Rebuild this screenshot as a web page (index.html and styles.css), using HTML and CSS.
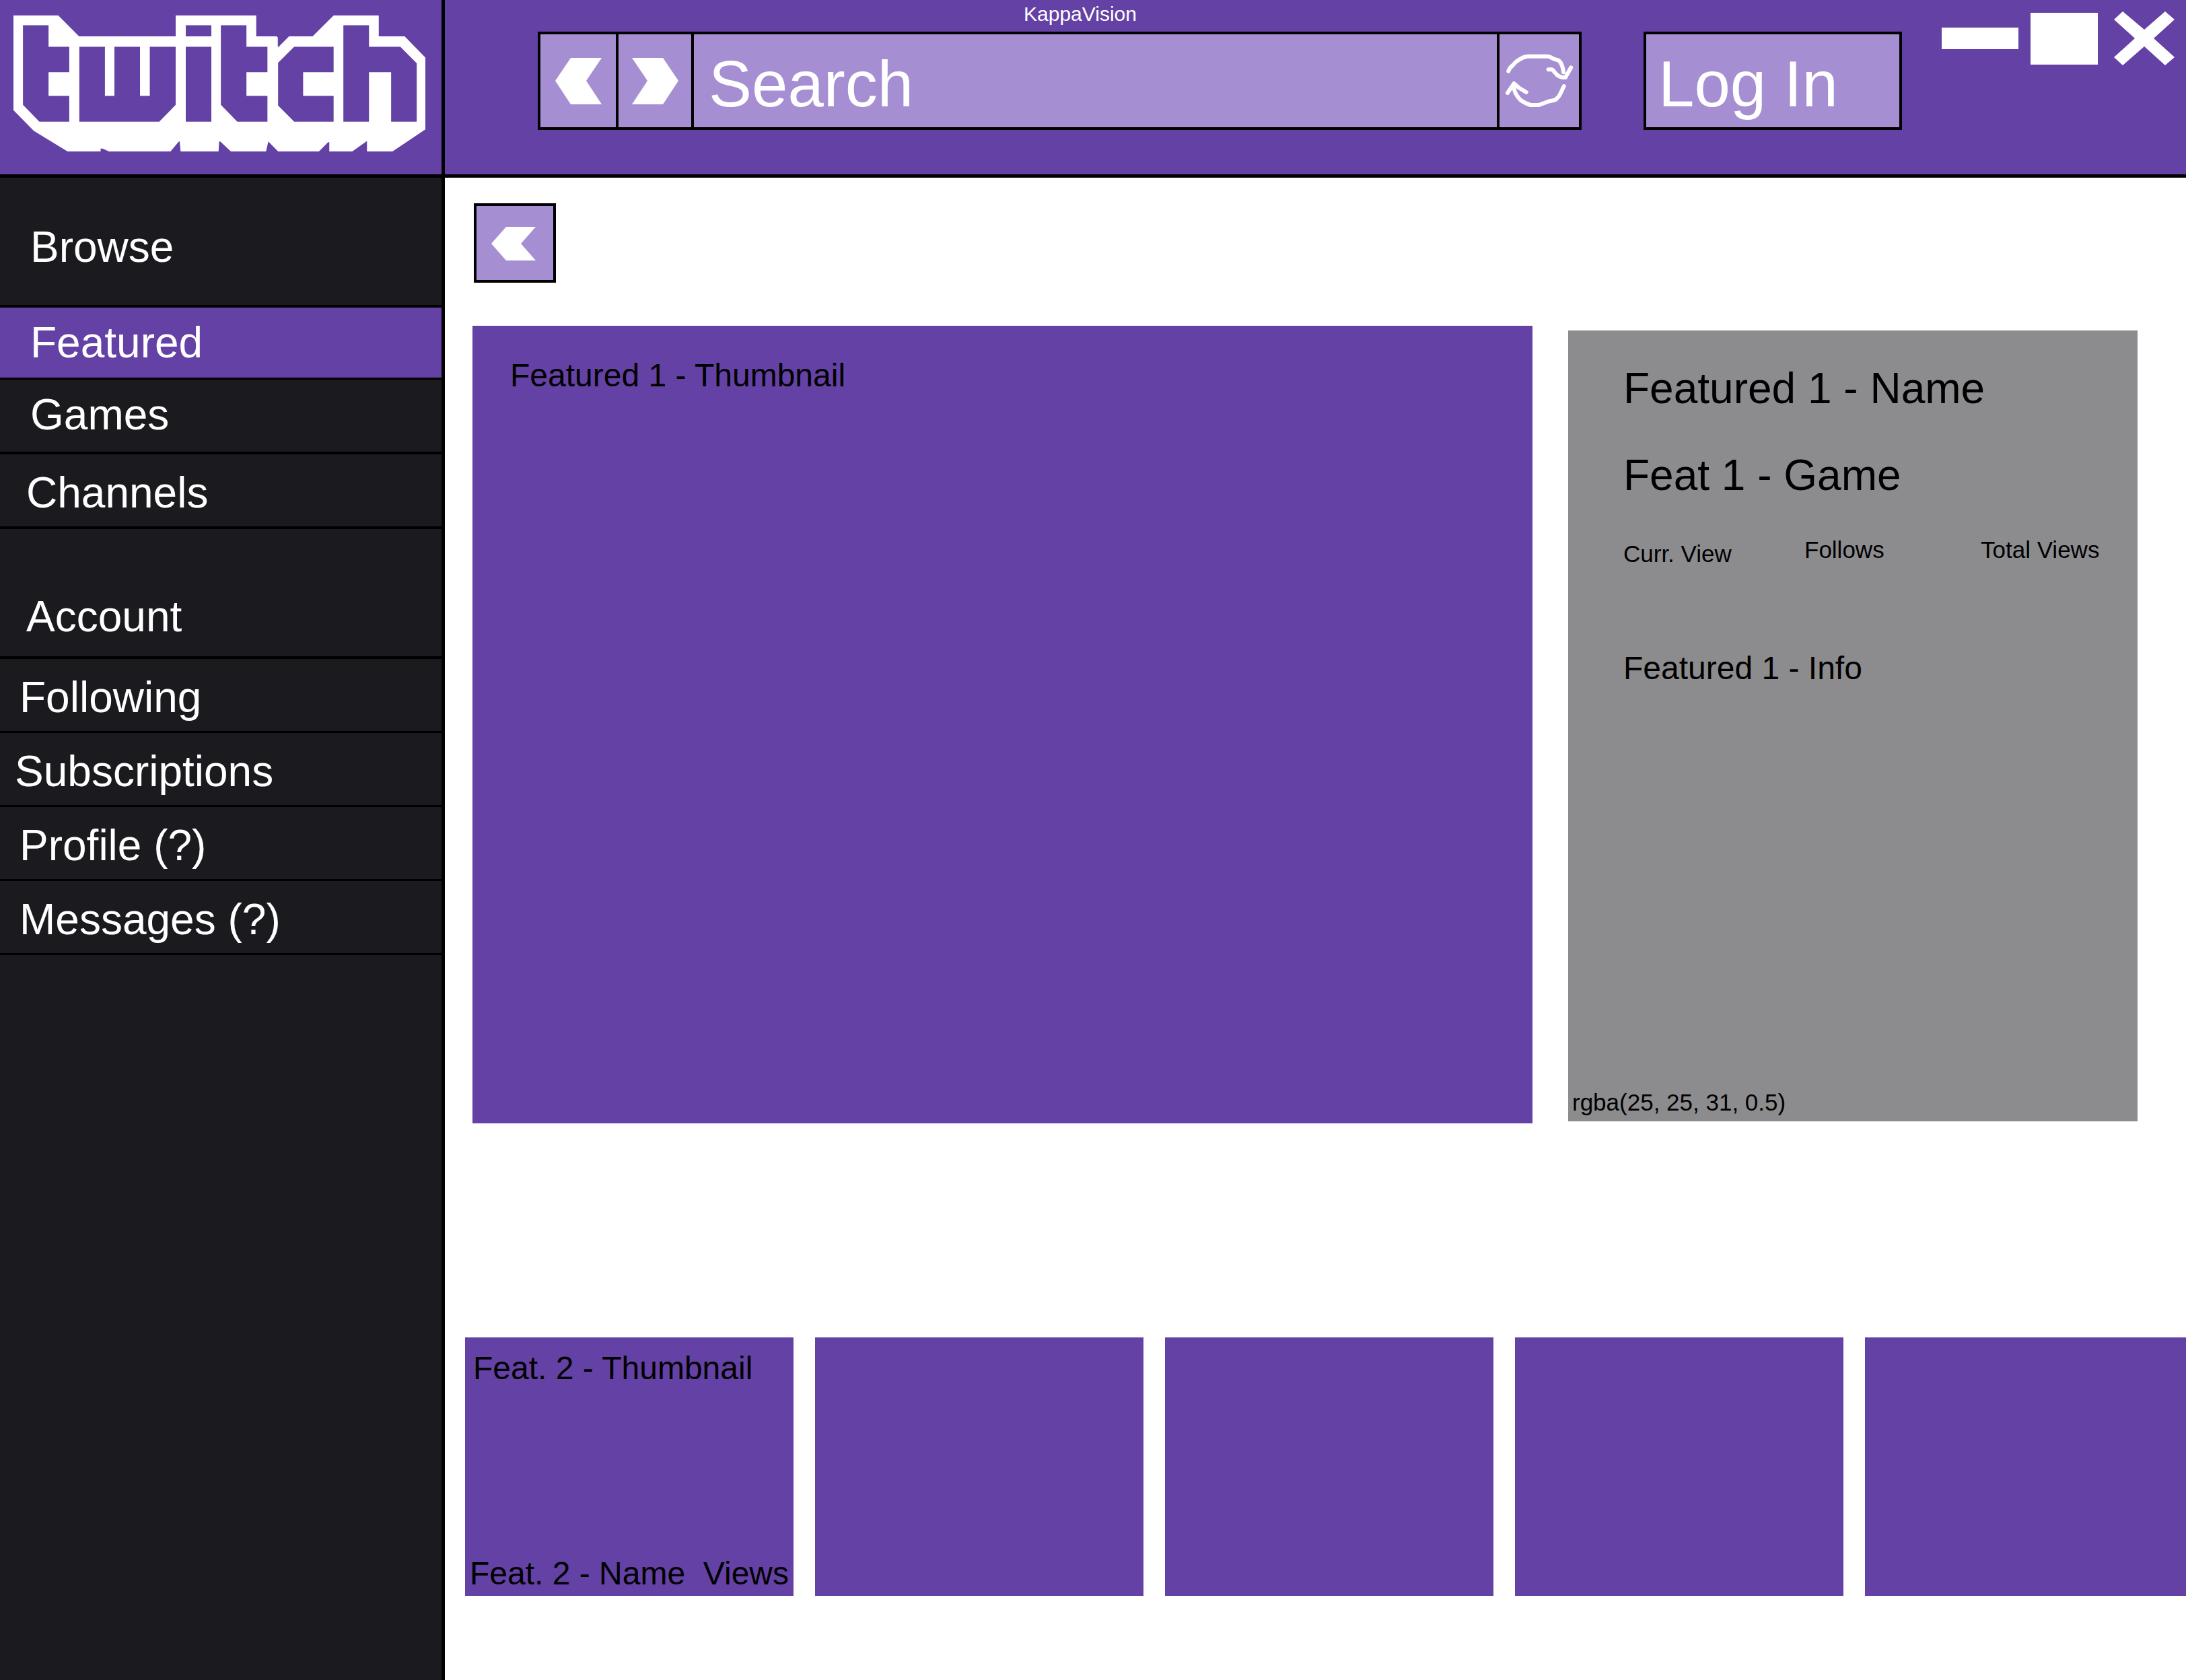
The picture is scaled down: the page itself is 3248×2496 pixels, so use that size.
FILE: index.html
```html
<!DOCTYPE html>
<html lang="en">
<head>
<meta charset="utf-8">
<meta name="viewport" content="width=device-width, initial-scale=1">
<title>KappaVision</title>
<link rel="stylesheet" href="styles.css">
</head>
<body>
<div class="app">
  <div class="brand">
    <svg class="brand-logo" viewBox="48 70 1432 604" preserveAspectRatio="none" role="img" aria-label="Twitch">
      <path fill="#fff" fill-rule="evenodd" d="M48 70H204L276 163H612V70H892V163H963L967 168V209H970L1006 163H1088L1161 70H1318V163H1408L1480 257V576L1366 674H1277V628L1226 674H1146V633H1142L1110 674H968L934 630L926 674H804L767 630H763L761 674H629L626 630H623L594 674H380L358 661H351V674H236L119 583L48 491Z
        M81 113H170V209H242V322H170V427H242V542H138L81 467Z
        M277 209H366V427H399V209H488V427H522V209H612V467L555 542H277Z
        M647 113H736V163H647Z M647 209H736V542H647Z
        M769 113H858V209H931V322H858V427H931V542H826L769 467Z
        M1024 209H1161V322H1055V427H1161V542H1024L968 470V280Z
        M1195 113H1284V209H1393L1450 282V542H1361V322H1284V542H1195Z"/>
    </svg>
  </div>

  <header class="topbar">
    <div class="topbar-main">
      <div class="app-title">KappaVision</div>
      <div class="toolbar">
        <form class="search" role="search">
          <button class="search-button search-back" type="button" aria-label="Back">
            <svg class="arrow" viewBox="0 0 69 69"><path d="M0 34 23 0H69L46 34 69 69H23Z"/></svg>
          </button>
          <button class="search-button search-forward" type="button" aria-label="Forward">
            <svg class="arrow" viewBox="0 0 69 69"><path d="M69 34 46 0H0L23 34 0 69H46Z"/></svg>
          </button>
          <input class="search-input" type="text" placeholder="Search" aria-label="Search">
          <button class="search-button search-refresh" type="button" aria-label="Refresh">
            <svg class="refresh" viewBox="0 0 100 78">
              <path d="M4.2 24.7C6 20 8 18 10.500 16.300C13 13 16 10 20 7.700Q26 3.500 32.800 2.700H63Q66 3 71 6.300L78 8.300Q82 11 83.300 15.300Q85.500 20 86 26.300"/>
              <path d="M63.600 22.300H69C73 25 75 30 79 32Q84 34.500 88.800 34.300L97.200 19.300"/>
              <path d="M86.700 47 80.500 60Q79 63 75 66.500Q73 68 70.700 68.300Q65 69 62.300 70.300L49.700 75H37Q30 73 22.300 67.700Q16 61 13.900 55.300Q12 50 12.200 43.700"/>
              <path d="M3 57 12.600 43 20 49.500 30.700 56"/>
            </svg>
          </button>
        </form>
        <button class="login" type="button">Log In</button>
      </div>
    </div>
    <div class="window-controls">
      <button class="window-button minimize" type="button" aria-label="Minimize"></button>
      <button class="window-button maximize" type="button" aria-label="Maximize"></button>
      <button class="window-button close" type="button" aria-label="Close">
        <svg class="close-icon" viewBox="0 0 90 80"><path d="M13 0 45 27 76 0 90 12 59 40 90 68 76 80 45 52 13 80 0 68 31 40 0 12Z"/></svg>
      </button>
    </div>
  </header>

  <nav class="sidebar">
    <section class="nav-group nav-browse">
      <h2 class="nav-heading">Browse</h2>
      <a class="nav-item active" href="#featured">Featured</a>
      <a class="nav-item" href="#games">Games</a>
      <a class="nav-item low inset-m" href="#channels">Channels</a>
    </section>
    <section class="nav-group nav-account">
      <h2 class="nav-heading">Account</h2>
      <a class="nav-item low" href="#following">Following</a>
      <a class="nav-item low inset-s" href="#subscriptions">Subscriptions</a>
      <a class="nav-item low" href="#profile">Profile (?)</a>
      <a class="nav-item low" href="#messages">Messages (?)</a>
    </section>
  </nav>

  <main class="content">
    <button class="page-back" type="button" aria-label="Back">
      <svg class="page-arrow" viewBox="0 0 66 50"><path d="M0 25 22 0H66L44 25 66 50H22Z"/></svg>
    </button>

    <div class="hero">
      <div class="hero-thumb">Featured 1 - Thumbnail</div>
      <aside class="hero-details">
        <h1 class="hero-title">Featured 1 - Name</h1>
        <h2 class="hero-title">Feat 1 - Game</h2>
        <div class="stats">
          <span class="stat current">Curr. View</span>
          <span class="stat">Follows</span>
          <span class="stat">Total Views</span>
        </div>
        <p class="hero-info">Featured 1 - Info</p>
        <p class="hero-note">rgba(25, 25, 31, 0.5)</p>
      </aside>
    </div>

    <div class="strip">
      <article class="tile">
        <div class="tile-thumb">Feat. 2 - Thumbnail</div>
        <div class="tile-meta"><span>Feat. 2 - Name</span><span>Views</span></div>
      </article>
      <article class="tile"></article>
      <article class="tile"></article>
      <article class="tile"></article>
      <article class="tile"></article>
    </div>
  </main>
</div>
</body>
</html>
```
FILE: styles.css
```css
:root {
  --purple: #6441a5;
  --lavender: #a68ed2;
  --dark: #1b1a1f;
}

* {
  box-sizing: border-box;
}

body {
  margin: 0;
  background: #fff;
  color: #000;
  font-family: "Liberation Sans", Arial, Helvetica, sans-serif;
  font-size: 48px;
}

h1,
h2,
p {
  margin: 0;
  font-weight: 400;
}

button {
  margin: 0;
  padding: 0;
  border: 0;
  border-radius: 0;
  background: none;
  color: inherit;
  font: inherit;
  cursor: pointer;
}

svg {
  display: block;
}

.app {
  display: grid;
  grid-template-columns: 661px minmax(0, 1fr);
  grid-template-rows: auto 1fr;
  min-height: 100vh;
}

/* Brand */

.brand {
  padding: 23px 24px 0 20px;
  border-right: 5px solid #000;
  border-bottom: 5px solid #000;
  background: var(--purple);
}

.brand-logo {
  width: 100%;
  height: 202px;
}

/* Top bar */

.topbar {
  display: flex;
  gap: 59px;
  padding-right: 17px;
  border-bottom: 5px solid #000;
  background: var(--purple);
  color: #fff;
}

.topbar-main {
  flex: 1;
  min-width: 0;
  padding: 3px 0 66px 138px;
}

.app-title {
  padding-left: 722px;
  font-size: 30px;
  line-height: 36px;
  height: 44px;
}

.toolbar {
  display: flex;
  gap: 92px;
}

.search {
  display: flex;
  flex: 1;
  min-width: 0;
  height: 146px;
  border: 4px solid #000;
  background: var(--lavender);
}

.search-button {
  display: flex;
  flex: none;
  align-items: center;
  justify-content: center;
}

.search-back {
  width: 116px;
  border-right: 4px solid #000;
}

.search-forward {
  width: 112px;
  border-right: 4px solid #000;
}

.search-refresh {
  width: 122px;
  border-left: 4px solid #000;
}

.arrow {
  width: 69px;
  height: 69px;
  fill: #fff;
}

.refresh {
  width: 100px;
  height: 78px;
  fill: none;
  stroke: #fff;
  stroke-width: 6;
  stroke-linecap: round;
  stroke-linejoin: round;
  overflow: visible;
}

.search-input {
  flex: 1;
  min-width: 0;
  padding: 10px 22px 0;
  border: 0;
  outline: 0;
  background: none;
  color: #fff;
  font: inherit;
  font-size: 96px;
}

.search-input::placeholder {
  color: #fff;
  opacity: 1;
}

.login {
  flex: none;
  width: 384px;
  height: 146px;
  padding: 10px 18px 0;
  border: 4px solid #000;
  background: var(--lavender);
  font-size: 96px;
  text-align: left;
}

.window-controls {
  display: flex;
  align-items: center;
  align-self: flex-start;
  padding-top: 17px;
}

.window-button {
  background: #fff;
}

.minimize {
  width: 114px;
  height: 32px;
  margin-right: 18px;
}

.maximize {
  width: 100px;
  height: 77px;
  margin-right: 24px;
}

.close {
  background: none;
}

.close-icon {
  width: 90px;
  height: 80px;
  fill: #fff;
}

/* Sidebar */

.sidebar {
  border-right: 5px solid #000;
  background: var(--dark);
  color: #fff;
  font-size: 64px;
  line-height: 72px;
}

.nav-heading {
  height: 193px;
  border-bottom: 4px solid #000;
  font-size: 64px;
}

.nav-item {
  display: block;
  height: 110px;
  padding-top: 16px;
  border-bottom: 3px solid #000;
  color: inherit;
  text-decoration: none;
}

.nav-item.low {
  padding-top: 21px;
}

.nav-browse > * {
  padding-left: 45px;
}

.nav-browse .nav-heading {
  padding-top: 67px;
}

.nav-browse .nav-item {
  height: 111px;
  border-bottom-width: 4px;
}

.nav-browse .nav-item.active {
  height: 107px;
  border-bottom-width: 3px;
  background: var(--purple);
}

.nav-browse .inset-m {
  padding-left: 39px;
}

.nav-account > * {
  padding-left: 29px;
}

.nav-account .nav-heading {
  padding-top: 94px;
  padding-left: 39px;
}

.nav-account .inset-s {
  padding-left: 22px;
}

/* Content */

.content {
  min-width: 0;
  padding-top: 38px;
}

.page-back {
  display: flex;
  align-items: center;
  justify-content: center;
  width: 122px;
  height: 118px;
  margin-left: 43px;
  padding: 2px 4px 0 0;
  border: 4px solid #000;
  background: var(--lavender);
}

.page-arrow {
  width: 66px;
  height: 50px;
  fill: #fff;
}

.hero {
  display: grid;
  grid-template-columns: 1575fr 846fr;
  gap: 53px;
  padding: 64px 72px 0 41px;
}

.hero-thumb {
  aspect-ratio: 1575 / 1185;
  padding: 46px 56px;
  background: var(--purple);
  line-height: 56px;
}

.hero-details {
  display: flex;
  flex-direction: column;
  margin: 7px 0 3px;
  padding: 50px 53px 0 82px;
  background: rgba(25, 25, 31, 0.5);
}

.hero-title {
  margin-bottom: 57px;
  font-size: 64px;
  line-height: 72px;
}

.stats {
  display: grid;
  grid-template-columns: 269fr 262fr 180fr;
  height: 46px;
  margin-top: -2px;
  font-size: 35px;
  line-height: 40px;
  white-space: nowrap;
}

.stat.current {
  align-self: end;
}

.hero-info {
  margin-top: 122px;
  line-height: 56px;
}

.hero-note {
  margin: auto 0 8px -76px;
  font-size: 35px;
  line-height: 40px;
}

.strip {
  display: flex;
  gap: 32px;
  margin-top: 318px;
  padding-left: 30px;
  overflow: hidden;
}

.tile {
  display: flex;
  flex: none;
  flex-direction: column;
  justify-content: space-between;
  width: 488px;
  height: 384px;
  padding: 18px 7px 5px;
  background: var(--purple);
  line-height: 56px;
}

.tile-thumb {
  padding-left: 5px;
}

.tile-meta {
  display: flex;
  justify-content: space-between;
}
```
